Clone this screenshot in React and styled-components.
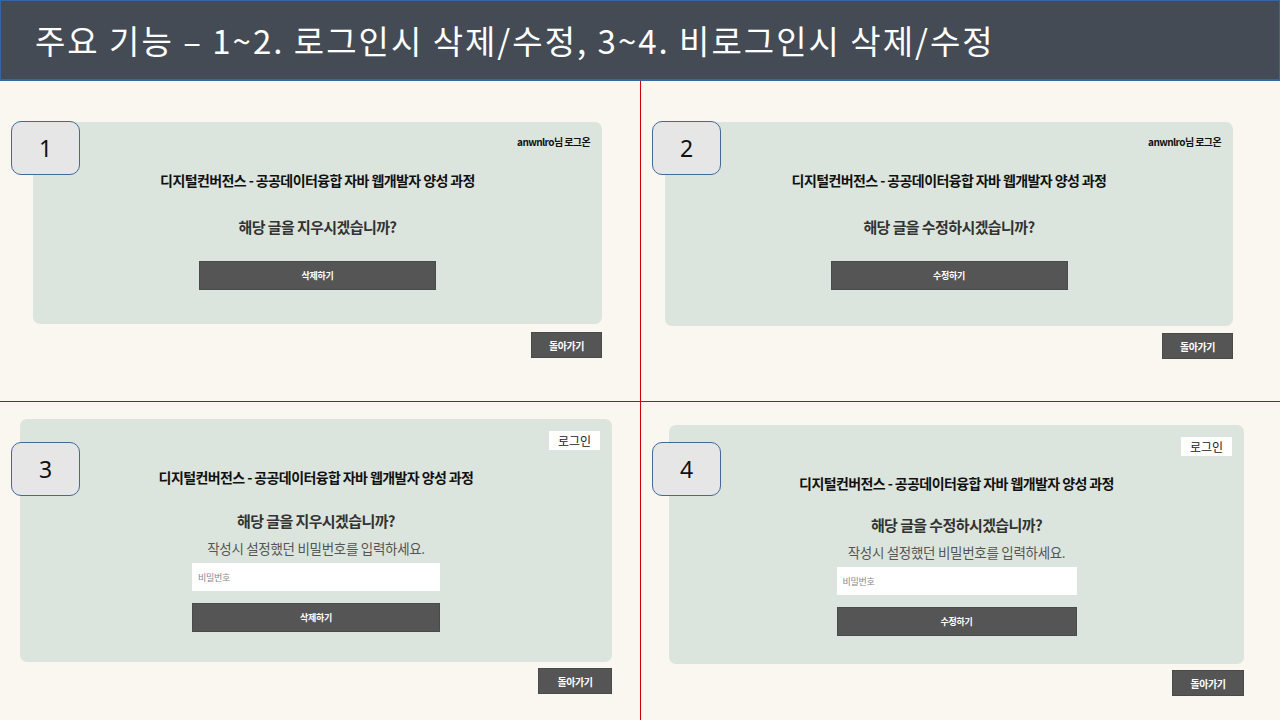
import React from 'react';
import styled, { createGlobalStyle } from 'styled-components';

const GlobalStyle = createGlobalStyle`
  html, body {
    margin: 0;
    padding: 0;
    background: #faf6f0;
  }
  body {
    font-family: "Noto Sans CJK KR", "Noto Sans", sans-serif;
  }
`;

// Whole slide
const Slide = styled.div`
  width: 1280px;
  height: 720px;
  display: flex;
  flex-direction: column;
  background: #faf6f0;
  overflow: hidden;
`;

const Header = styled.header`
  height: 81px;
  box-sizing: border-box;
  background: #444b55;
  border: 1px solid #3367a6;
  border-bottom-width: 2px;
  display: flex;
  align-items: center;
  padding-left: 34px;
  color: #ffffff;
  font-size: 33px;
  font-weight: 400;
  letter-spacing: 2px;
`;

// 2x2 grid, the red lines are the gap
const Grid = styled.div`
  flex: 1;
  display: grid;
  grid-template-columns: 640px 639px;
  grid-template-rows: 320px 318px;
  gap: 1px;
  background: #d00000;
`;

const Quadrant = styled.section`
  position: relative;
  background: #faf6f0;
  padding: ${(p) => p.$top}px 0 0 ${(p) => p.$left}px;
  box-sizing: border-box;
`;

const Badge = styled.div`
  position: absolute;
  left: 11px;
  top: 40px;
  width: 69px;
  height: 54px;
  box-sizing: border-box;
  background: #e6e6e6;
  border: 1px solid #41699b;
  border-radius: 10px;
  display: flex;
  align-items: center;
  justify-content: center;
  font-family: "Noto Sans", sans-serif;
  font-size: 23px;
  color: #111;
  z-index: 1;
`;

const Shot = styled.div`
  width: ${(p) => p.$width}px;
  display: flex;
  flex-direction: column;
  align-items: flex-end;
  gap: ${(p) => p.$gap}px;
`;

const Card = styled.div`
  align-self: stretch;
  height: ${(p) => p.$height}px;
  box-sizing: border-box;
  background: #dce5dd;
  border-radius: 7px;
  display: flex;
  flex-direction: column;
  align-items: center;
  padding-top: ${(p) => p.$padTop}px;
  letter-spacing: -0.6px;
`;

const UserLine = styled.div`
  align-self: flex-end;
  margin-right: 12px;
  font-size: 10px;
  line-height: 14px;
  font-weight: 700;
  color: #111;
`;

const LoginButton = styled.div`
  align-self: flex-end;
  margin-right: 12px;
  width: 51px;
  height: 19px;
  background: #ffffff;
  display: flex;
  align-items: center;
  justify-content: center;
  font-size: 12px;
  color: #222;
  letter-spacing: 0;
`;

const Title = styled.h2`
  margin: ${(p) => p.$mt}px 0 0;
  font-size: 14px;
  line-height: 20px;
  font-weight: 700;
  color: #111;
`;

const Question = styled.h3`
  margin: ${(p) => p.$mt}px 0 0;
  font-size: 15px;
  line-height: 22px;
  font-weight: 700;
  color: #333;
`;

const Prompt = styled.p`
  margin: 7px 0 0;
  font-size: 13.5px;
  line-height: 18px;
  font-weight: 400;
  color: #555;
  letter-spacing: -0.3px;
`;

const PasswordInput = styled.input`
  margin-top: 6px;
  width: ${(p) => p.$width}px;
  height: 28px;
  box-sizing: border-box;
  border: none;
  outline: none;
  background: #ffffff;
  padding: 0 6px;
  font-family: inherit;
  font-size: 9px;
  letter-spacing: -0.3px;
  &::placeholder {
    color: #888;
  }
`;

const ActionButton = styled.div`
  margin-top: ${(p) => p.$mt}px;
  width: ${(p) => p.$width}px;
  height: 29px;
  box-sizing: border-box;
  background: #555555;
  border: 1px solid #4a4a4a;
  display: flex;
  align-items: center;
  justify-content: center;
  color: #ffffff;
  font-size: 9px;
  font-weight: 700;
  letter-spacing: -0.3px;
`;

const BackButton = styled.div`
  width: ${(p) => p.$width}px;
  height: 26px;
  box-sizing: border-box;
  background: #555555;
  border: 1px solid #4a4a4a;
  display: flex;
  align-items: center;
  justify-content: center;
  color: #ffffff;
  font-size: 10px;
  font-weight: 700;
  letter-spacing: -0.4px;
`;

const COURSE = '디지털컨버전스 - 공공데이터융합 자바 웹개발자 양성 과정';

const panels = [
  { no: 1, left: 33, top: 41, width: 569, height: 202, gap: 8, back: 71, mode: 'user', q: 26, verb: '지우시겠습니까?', action: '삭제하기' },
  { no: 2, left: 24, top: 41, width: 568, height: 204, gap: 7, back: 71, mode: 'user', q: 26, verb: '수정하시겠습니까?', action: '수정하기' },
  { no: 3, left: 20, top: 17, width: 592, height: 243, gap: 6, back: 74, mode: 'guest', q: 23, verb: '지우시겠습니까?', action: '삭제하기', field: 248 },
  { no: 4, left: 28, top: 23, width: 575, height: 239, gap: 6, back: 72, mode: 'guest', q: 21, verb: '수정하시겠습니까?', action: '수정하기', field: 240 },
];

const Panel = ({ p }) => (
  <Quadrant $left={p.left} $top={p.top}>
    <Badge>{p.no}</Badge>
    <Shot $width={p.width} $gap={p.gap}>
      {p.mode === 'user' ? (
        <Card $height={p.height} $padTop={13}>
          <UserLine>anwnlro님 로그온</UserLine>
          <Title $mt={21}>{COURSE}</Title>
          <Question $mt={p.q}>해당 글을 {p.verb}</Question>
          <ActionButton $mt={23} $width={237}>{p.action}</ActionButton>
        </Card>
      ) : (
        <Card $height={p.height} $padTop={12}>
          <LoginButton>로그인</LoginButton>
          <Title $mt={17}>{COURSE}</Title>
          <Question $mt={p.q}>해당 글을 {p.verb}</Question>
          <Prompt>작성시 설정했던 비밀번호를 입력하세요.</Prompt>
          <PasswordInput $width={p.field} placeholder="비밀번호" readOnly />
          <ActionButton $mt={12} $width={p.field}>{p.action}</ActionButton>
        </Card>
      )}
      <BackButton $width={p.back}>돌아가기</BackButton>
    </Shot>
  </Quadrant>
);

export default function App() {
  return (
    <>
      <GlobalStyle />
      <Slide>
        <Header>주요 기능 – 1~2. 로그인시 삭제/수정, 3~4. 비로그인시 삭제/수정</Header>
        <Grid>
          {panels.map((p) => (
            <Panel key={p.no} p={p} />
          ))}
        </Grid>
      </Slide>
    </>
  );
}
